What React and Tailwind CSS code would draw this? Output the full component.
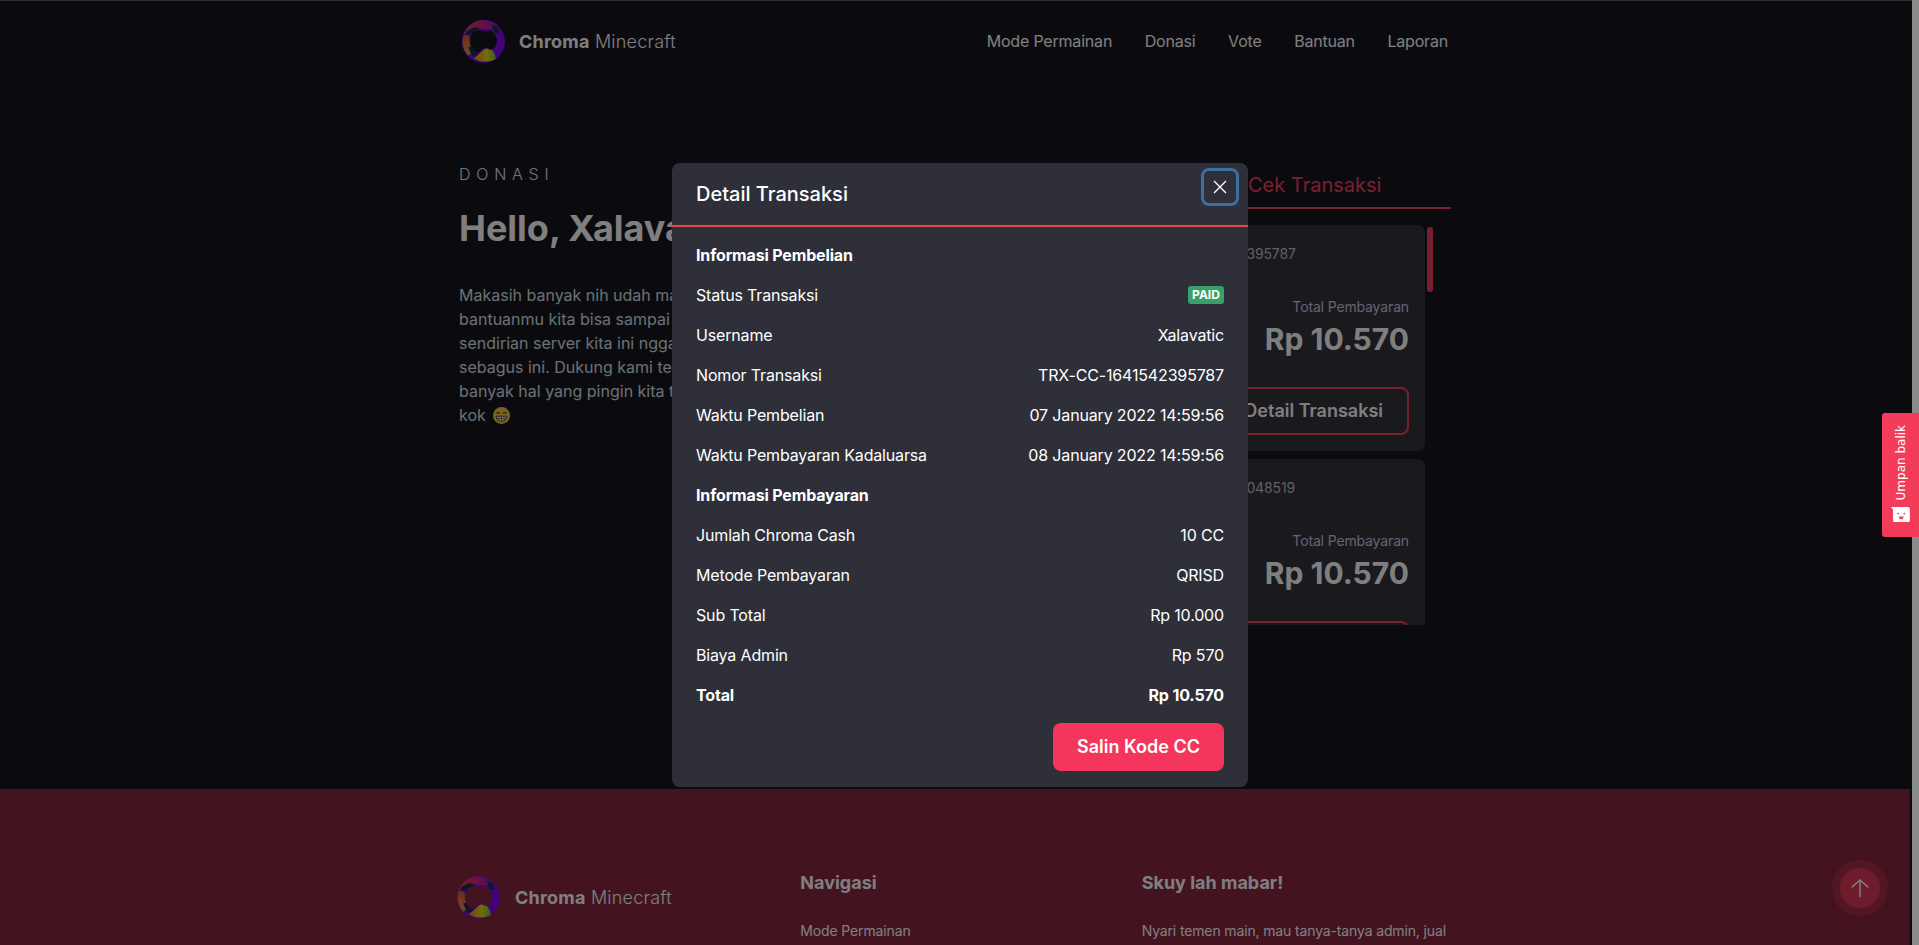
import React from "react";

function Logo({ hole, id, className }) {
  return (
    <svg viewBox="0 0 42 42" className={className} aria-hidden="true">
      <defs>
        <linearGradient id={`${id}-top`} x1="0" y1="0.4" x2="1" y2="0.2">
          <stop offset="0" stopColor="#e23a4e" />
          <stop offset="0.55" stopColor="#d0208f" />
          <stop offset="1" stopColor="#7a10e8" />
        </linearGradient>
        <linearGradient id={`${id}-bot`} x1="0" y1="0" x2="1" y2="0">
          <stop offset="0" stopColor="#e08a20" />
          <stop offset="0.6" stopColor="#e8d810" />
          <stop offset="1" stopColor="#70c040" />
        </linearGradient>
        <linearGradient id={`${id}-left`} x1="0" y1="0" x2="0" y2="1">
          <stop offset="0" stopColor="#e2404e" />
          <stop offset="1" stopColor="#d8a040" />
        </linearGradient>
      </defs>
      <circle cx="21" cy="21" r="21" fill="#8406f5" />
      <path d="M21 0A21 21 0 0 0 3 11L14 8 L30 9 L36 6A21 21 0 0 0 21 0Z" fill={`url(#${id}-top)`} />
      <path d="M3 11A21 21 0 0 0 6 35L12 30 L8 18Z" fill={`url(#${id}-left)`} />
      <path d="M2 15C6 8 12 6 17 8 L15 12 L8 14Z" fill="#1c3048" />
      <path d="M29 5L34 6 L37 12 L32 14Z" fill="#1c3048" />
      <path d="M6 26L10 27 L16 33 L13 38 Q8 34 6 26Z" fill="#1c3048" />
      <path d="M11 37A21 21 0 0 0 33 38C33 32 28 26 23 28 C19 30 17 34 11 37Z" fill={`url(#${id}-bot)`} />
      <path
        d="M11 12C17 8 23 12 29 10C31 14 35 17 34 22C33 26 31 29 27 29C23 26 20 28 17 31C13 33 9 29 8 24C7 19 8 15 11 12Z"
        fill={hole}
      />
    </svg>
  );
}

function Emoji() {
  return (
    <svg viewBox="0 0 17 17" className="ml-[3px] inline-block h-[17px] w-[17px] align-[-3px]" aria-hidden="true">
      <circle cx="8.5" cy="8.5" r="8.5" fill="#f5c542" />
      <path d="M3.5 6.5Q5 4.5 6.8 6.5M10.2 6.5Q12 4.5 13.5 6.5" fill="none" stroke="#3a2a10" strokeWidth="1.1" />
      <path d="M3 9.2H14Q13.5 14.2 8.5 14.2Q3.5 14.2 3 9.2Z" fill="#fff" stroke="#3a2a10" strokeWidth="0.8" />
      <path d="M3.4 11.5H13.6M6 9.2V14M8.5 9.2V14.2M11 9.2V14" stroke="#3a2a10" strokeWidth="0.6" />
    </svg>
  );
}

function Card({ trx }) {
  return (
    <div className="w-[308px] shrink-0 rounded-lg bg-[#32323c] px-4 pt-[17px] pb-4">
      <div className="text-sm leading-6 tracking-[-0.01em] text-white/70">{trx}</div>
      <div className="mt-[31px] text-right text-sm leading-5 tracking-[-0.01em] text-[#c8c8e0]">Total Pembayaran</div>
      <div className="text-right text-[30px] leading-[44px] font-bold text-white">Rp 10.570</div>
      <div className="mt-[26px] flex justify-end">
        <button className="h-12 rounded-lg border-2 border-[#f43f5e] px-6 text-lg font-semibold text-white">
          Detail Transaksi
        </button>
      </div>
    </div>
  );
}

function Row({ label, children, bold }) {
  return (
    <div className={`flex h-10 items-center justify-between text-base tracking-[-0.01em] text-white ${bold ? "font-bold" : ""}`}>
      <span>{label}</span>
      <span>{children}</span>
    </div>
  );
}

export default function App() {
  return (
    <div className="relative h-[945px] w-full overflow-hidden bg-[#16161f] font-['Inter',sans-serif] text-white">
      <div className="h-px w-full bg-[#5c5c60]" />
      <div className="w-[1910px]">
        <div className="h-[788px]">
          <div className="mx-auto w-[1024px] px-4">
            <nav className="flex h-[80px] items-center justify-between pr-[3px] pl-[3px]">
              <div className="flex items-center gap-[14px]">
                <Logo hole="#16161f" id="a" className="h-[43px] w-[43px]" />
                <div className="pt-[2px] text-lg tracking-[0.012em]">
                  <span className="font-bold">Chroma</span> <span className="font-light">Minecraft</span>
                </div>
              </div>
              <div className="flex items-center gap-[32.6px] text-base tracking-[-0.012em] text-white">
                <span>Mode Permainan</span>
                <span>Donasi</span>
                <span>Vote</span>
                <span>Bantuan</span>
                <span>Laporan</span>
              </div>
            </nav>
            <div className="mt-[81px] flex justify-between">
              <div className="w-[560px]">
                <div className="text-base leading-6 font-light tracking-[0.36em] text-[#dbeafe]">DONASI</div>
                <h1 className="mt-[22px] text-4xl leading-10 font-bold text-white">Hello, Xalavatic!</h1>
                <p className="mt-[35px] text-base leading-6 text-[#d6e0ea]">
                  Makasih banyak nih udah mau bantu server kita.
                  <br />
                  bantuanmu kita bisa sampai sekarang ini, soalnya
                  <br />
                  sendirian server kita ini nggak akan bisa jadi
                  <br />
                  sebagus ini. Dukung kami terus ya, masih ada
                  <br />
                  banyak hal yang pingin kita tambahin di server
                  <br />
                  kok <Emoji />
                </p>
              </div>
              <div className="w-[334px]">
                <div className="flex h-[47px] items-center border-b-2 border-[#f43f5e]">
                  <span className="w-[131px] text-center text-xl text-white/60">Donasi</span>
                  <span className="text-xl text-[#f43f5e]">Cek Transaksi</span>
                </div>
                <div className="relative mt-[16px] h-[400px] overflow-hidden">
                  <div className="flex flex-col gap-2">
                    <Card trx="TRX-CC-1641542395787" />
                    <Card trx="TRX-CC-1641542048519" />
                  </div>
                  <div className="absolute top-[2px] left-[310px] h-[65px] w-[6px] rounded-full bg-[#f43f5e]" />
                </div>
              </div>
            </div>
          </div>
        </div>
        <footer className="h-[156px] overflow-hidden bg-[#86263e]">
          <div className="mx-auto mt-[80px] grid w-[1024px] grid-cols-3 gap-8 px-4">
            <div className="-ml-[2px] mt-[7px] flex h-[43px] items-center gap-[15px]">
              <Logo hole="#86263e" id="b" className="h-[43px] w-[43px]" />
              <div className="text-lg tracking-[0.012em]">
                <span className="font-bold">Chroma</span> <span className="font-light">Minecraft</span>
              </div>
            </div>
            <div>
              <h3 className="text-lg leading-7 font-bold">Navigasi</h3>
              <p className="mt-[22px] text-sm leading-6 tracking-[-0.01em]">Mode Permainan</p>
            </div>
            <div>
              <h3 className="text-lg leading-7 font-bold">Skuy lah mabar!</h3>
              <p className="mt-[22px] text-sm leading-6 tracking-[-0.01em] whitespace-nowrap">Nyari temen main, mau tanya-tanya admin, jual</p>
            </div>
          </div>
        </footer>
      </div>

      <div className="absolute top-[860px] left-[1832px] flex h-14 w-14 items-center justify-center rounded-full bg-[#f43f5e]/30">
        <div className="flex h-10 w-10 items-center justify-center rounded-full bg-[#f43f5e]/70">
          <svg viewBox="0 0 20 20" className="h-5 w-5" fill="none" stroke="#fff" strokeWidth="1.5" aria-hidden="true">
            <path d="M10 19V2M1.5 9.5L10 2L18.5 9.5" />
          </svg>
        </div>
      </div>

      {/* overlay + modal */}
      <div className="absolute inset-0 flex items-center justify-center bg-black/50 pt-[5px] pl-px">
        <div className="w-[576px] rounded-lg bg-[#2e2f38]">
          <div className="relative flex h-[64px] items-center border-b-2 border-[#ef4444] px-6 pb-[1px]">
            <h2 className="text-xl font-medium">Detail Transaksi</h2>
            <button className="absolute top-[5px] right-[9px] flex h-[38px] w-[38px] items-center justify-center rounded-lg border-[3px] border-[#3b6f9f]">
              <svg viewBox="0 0 14 14" className="h-[14px] w-[14px]" fill="none" stroke="#fff" strokeWidth="1.4" aria-hidden="true">
                <path d="M1 1L13 13M13 1L1 13" />
              </svg>
            </button>
          </div>
          <div className="px-6 pt-[8px] pb-4">
            <Row label="Informasi Pembelian" bold />
            <Row label="Status Transaksi">
              <span className="flex h-[18px] w-9 items-center justify-center rounded-[3px] bg-[#38a169] text-xs font-bold tracking-normal">PAID</span>
            </Row>
            <Row label="Username">Xalavatic</Row>
            <Row label="Nomor Transaksi">TRX-CC-1641542395787</Row>
            <Row label="Waktu Pembelian">07 January 2022 14:59:56</Row>
            <Row label="Waktu Pembayaran Kadaluarsa">08 January 2022 14:59:56</Row>
            <Row label="Informasi Pembayaran" bold />
            <Row label="Jumlah Chroma Cash">10 CC</Row>
            <Row label="Metode Pembayaran">QRISD</Row>
            <Row label="Sub Total">Rp 10.000</Row>
            <Row label="Biaya Admin">Rp 570</Row>
            <Row label="Total" bold>Rp 10.570</Row>
            <div className="mt-2 flex justify-end">
              <button className="h-12 w-[171px] rounded-lg bg-[#f4365c] text-lg font-semibold">Salin Kode CC</button>
            </div>
          </div>
        </div>
      </div>

      {/* scrollbar */}
      <div className="absolute top-0 right-0 bottom-0 w-[7px] bg-[#8a8a8a]" />

      {/* feedback tab */}
      <div className="absolute top-[413px] right-0 flex h-[124px] w-[37px] flex-col items-center justify-between rounded-l-[3px] bg-[#f23c5a] pt-3 pb-[15px]">
        <span className="rotate-180 font-['DejaVu_Sans',sans-serif] text-xs leading-none [writing-mode:vertical-rl]">Umpan balik</span>
        <svg viewBox="0 0 20 16" className="h-[15px] w-[19px]" aria-hidden="true">
          <path d="M0 0H18Q20 0 20 2V14Q20 16 18 16H4Q2 16 2 14V3Z" fill="#fff" />
          <circle cx="7.5" cy="7" r="1" fill="#f23c5a" />
          <circle cx="14" cy="7" r="1" fill="#f23c5a" />
          <path d="M8 10H13.5Q13 13 10.7 13Q8.5 13 8 10Z" fill="#f23c5a" />
        </svg>
      </div>
    </div>
  );
}
